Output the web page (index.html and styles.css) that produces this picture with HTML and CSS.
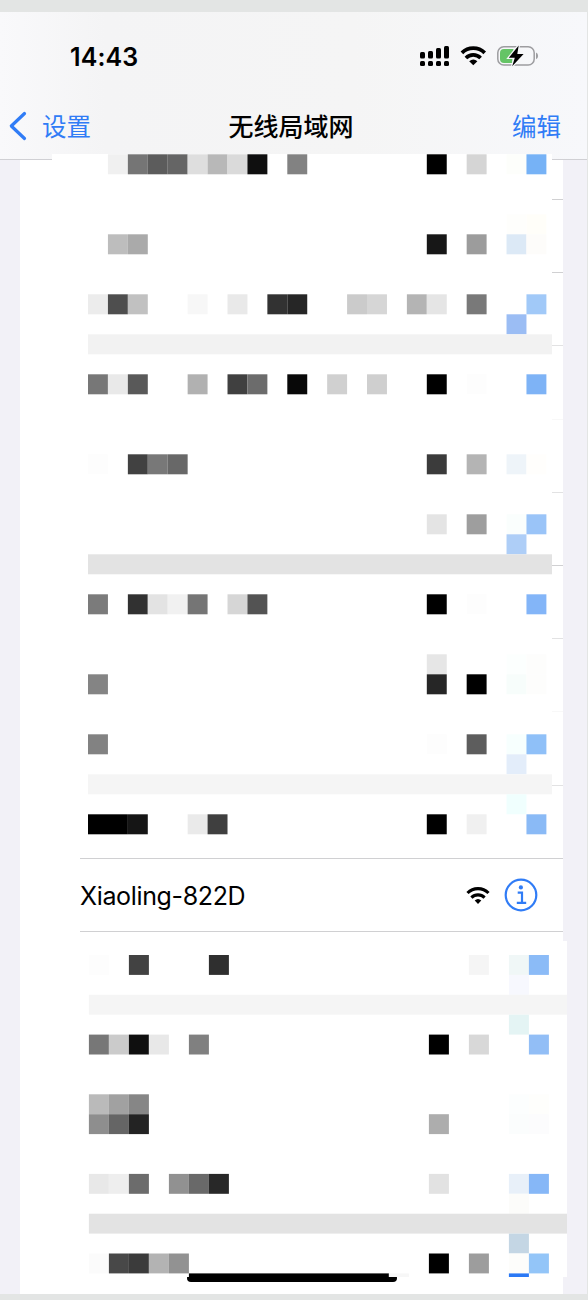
FILE: index.html
```
<!DOCTYPE html>
<html lang="zh-CN">
<head>
<meta charset="utf-8">
<title>无线局域网</title>
<link rel="stylesheet" href="styles.css">
</head>
<body>
<div class="screen">
  <header class="header">
    <div class="status">
      <span class="time">14:43</span>
      <svg class="status-icons" width="120" height="24" viewBox="0 0 120 24">
        <g>
          <rect x="1" y="8" width="5" height="6.5" rx="1.5"/><rect x="9" y="7" width="5" height="7.5" rx="1.5"/><rect x="17" y="4" width="5" height="10.5" rx="1.5"/><rect x="25" y="2" width="5" height="12.5" rx="1.5"/>
          <rect x="1" y="17" width="5" height="5" rx="1.5"/><rect x="9" y="17" width="5" height="5" rx="1.5"/><rect x="17" y="17" width="5" height="5" rx="1.5"/><rect x="25" y="17" width="5" height="5" rx="1.5"/>
        </g>
        <g fill="none" stroke="#000" stroke-width="3.7">
          <path d="M42.9 8.9a16 16 0 0 1 22.8 0"/>
          <path d="M46.9 14a10.4 10.4 0 0 1 14.7 0"/>
        </g>
        <path d="M50.2 17.2q4.1-3.3 8.2 0L54.3 21.2z"/>
        <rect x="78.8" y="2.8" width="36.4" height="18.2" rx="6" fill="none" stroke="#9d9da0" stroke-width="1.5"/>
        <path d="M94.5 5H85q-4 0-4 4v6q0 4 4 4h8z" fill="#65c466"/>
        <path d="M117 8.6q2.1 1 2.1 3.3t-2.1 3.3z" fill="#9d9da0"/>
        <path d="M99.7 1.6L89.8 13.7h6L93.2 22.2 104.6 10h-6.3z" stroke="#f6f7f9" stroke-width="2.4" paint-order="stroke"/>
      </svg>
    </div>
    <nav class="nav">
      <a class="back"><svg width="18" height="30" viewBox="0 0 18 30"><path d="M15.5 2.5L2.3 15l13.2 12.5" fill="none" stroke="#307cf6" stroke-width="3.2" stroke-linecap="round" stroke-linejoin="round"/></svg><span class="label">设置</span></a>
      <h1 class="title">无线局域网</h1>
      <a class="edit">编辑</a>
    </nav>
  </header>
  <main class="content">
    <div class="card">
      <div class="row first"></div>
      <div class="row"></div>
      <div class="row light"></div>
      <div class="row tall faint"></div>
      <div class="row light"></div>
      <div class="row"></div>
      <div class="row light"></div>
      <div class="row faint"></div>
      <div class="row tall light"></div>
      <div class="row"></div>
      <div class="row network">
        <span class="name">Xiaoling-822D</span>
        <svg class="wifi" width="24" height="18" viewBox="0 0 24 18">
          <g fill="none" stroke="#000" stroke-width="3.1"><path d="M1.5 7a14.8 14.8 0 0 1 21 0"/><path d="M5.4 11.6a9.4 9.4 0 0 1 13.2 0"/></g>
          <path d="M8.7 14.6q3.3-3 6.6 0L12 18z"/>
        </svg>
        <svg class="info" width="34" height="34" viewBox="0 0 34 34">
          <circle cx="17" cy="17" r="15.3" fill="none" stroke="#307cf6" stroke-width="2.2"/>
          <circle cx="16.9" cy="9.4" r="2.1" fill="#307cf6"/>
          <path d="M13.7 14.6H18V24.8M12.8 24.8h9.4" fill="none" stroke="#307cf6" stroke-width="2.2"/>
        </svg>
      </div>
    </div>
  </main>
  <div class="home-bar"></div>
  <svg class="mosaic upper" width="500" height="694" viewBox="0 0 500 694">
    <g transform="translate(36 .3) scale(19.93 20)">
      <rect x="1" y="0" fill="#f0f0f0"/><rect x="2" y="0" fill="#757575"/><rect x="3" y="0" fill="#5c5c5c"/><rect x="4" y="0" fill="#656565"/><rect x="5" y="0" fill="#dedede"/><rect x="6" y="0" fill="#b8b8b8"/><rect x="7" y="0" fill="#dadada"/><rect x="8" y="0" fill="#0f0f0f"/><rect x="10" y="0" fill="#828282"/><rect x="17" y="0"/><rect x="19" y="0" fill="#d5d5d5"/><rect x="21" y="0" fill="#fdfefb"/><rect x="22" y="0" fill="#76b2f6"/>
      <rect x="21" y="3" fill="#fefefc"/><rect x="22" y="3" fill="#fffef9"/>
      <rect x="1" y="4" fill="#bdbdbd"/><rect x="2" y="4" fill="#aaa"/><rect x="17" y="4" fill="#171717"/><rect x="19" y="4" fill="#9c9c9c"/><rect x="21" y="4" fill="#dce9f6"/><rect x="22" y="4" fill="#fdfcfa"/>
      <rect x="0" y="7" fill="#ececec"/><rect x="1" y="7" fill="#4e4e4e"/><rect x="2" y="7" fill="#c1c1c1"/><rect x="5" y="7" fill="#f7f7f7"/><rect x="7" y="7" fill="#e9e9e9"/><rect x="9" y="7" fill="#323232"/><rect x="10" y="7" fill="#262626"/><rect x="13" y="7" fill="#cbcbcb"/><rect x="14" y="7" fill="#d6d6d6"/><rect x="16" y="7" fill="#b4b4b4"/><rect x="17" y="7" fill="#e5e5e5"/><rect x="19" y="7" fill="#797979"/><rect x="22" y="7" fill="#a1c9f8"/>
      <rect x="21" y="8" fill="#9bbdf4"/>
      <rect class="bar" x="0" y="9" fill="#f2f2f2"/>
      <rect x="0" y="11" fill="#777"/><rect x="1" y="11" fill="#e9e9e9"/><rect x="2" y="11" fill="#595959"/><rect x="5" y="11" fill="#b1b1b1"/><rect x="7" y="11" fill="#404040"/><rect x="8" y="11" fill="#6c6c6c"/><rect x="10" y="11" fill="#080808"/><rect x="12" y="11" fill="#d0d0d0"/><rect x="14" y="11" fill="#cfcfcf"/><rect x="17" y="11"/><rect x="19" y="11" fill="#fdfdfd"/><rect x="22" y="11" fill="#7eb3f6"/>
      <rect x="0" y="15" fill="#fdfdfd"/><rect x="2" y="15" fill="#414141"/><rect x="3" y="15" fill="#787878"/><rect x="4" y="15" fill="#686868"/><rect x="17" y="15" fill="#3b3b3b"/><rect x="19" y="15" fill="#b4b4b4"/><rect x="21" y="15" fill="#eef4f9"/><rect x="22" y="15" fill="#fffefc"/>
      <rect x="17" y="18" fill="#e4e4e4"/><rect x="19" y="18" fill="#9e9e9e"/><rect x="21" y="18" fill="#fafefd"/><rect x="22" y="18" fill="#9ac4f8"/>
      <rect x="21" y="19" fill="#aecef7"/>
      <rect class="bar" x="0" y="20" fill="#e3e3e3"/>
      <rect x="0" y="22" fill="#7b7b7b"/><rect x="2" y="22" fill="#313131"/><rect x="3" y="22" fill="#e3e3e3"/><rect x="4" y="22" fill="#f1f1f1"/><rect x="5" y="22" fill="#757575"/><rect x="7" y="22" fill="#d6d6d6"/><rect x="8" y="22" fill="#535353"/><rect x="17" y="22"/><rect x="19" y="22" fill="#fdfdfd"/><rect x="22" y="22" fill="#83b5f8"/>
      <rect x="17" y="25" fill="#e6e6e6"/><rect x="21" y="25" fill="#fcfffe"/><rect x="22" y="25" fill="#fdfdfc"/>
      <rect x="0" y="26" fill="#848484"/><rect x="17" y="26" fill="#262626"/><rect x="19" y="26"/><rect x="21" y="26" fill="#f7fdfb"/><rect x="22" y="26" fill="#fdfdfc"/>
      <rect x="0" y="29" fill="#828282"/><rect x="17" y="29" fill="#fdfdfd"/><rect x="19" y="29" fill="#5d5d5d"/><rect x="21" y="29" fill="#f7fffe"/><rect x="22" y="29" fill="#8fc0f8"/>
      <rect x="21" y="30" fill="#e3edfa"/>
      <rect class="bar" x="0" y="31" fill="#f5f5f5"/>
      <rect x="21" y="32" fill="#f0fffe"/>
      <rect class="pair" x="0" y="33"/><rect x="2" y="33" fill="#151515"/><rect x="5" y="33" fill="#eaeaea"/><rect x="6" y="33" fill="#3f3f3f"/><rect x="17" y="33"/><rect x="19" y="33" fill="#f0f0f0"/><rect x="22" y="33" fill="#8abaf6"/>
    </g>
  </svg>
  <svg class="mosaic lower" width="487" height="336" viewBox="0 0 487 336">
    <g transform="translate(8.9 14) scale(20 19.9)">
      <rect x="0" y="0" fill="#fdfdfd"/><rect x="2" y="0" fill="#424242"/><rect x="6" y="0" fill="#2f2f2f"/><rect x="19" y="0" fill="#f5f5f5"/><rect x="21" y="0" fill="#f0f7f7"/><rect x="22" y="0" fill="#8bbbf7"/>
      <rect x="21" y="1" fill="#f7f8fe"/>
      <rect class="bar" x="0" y="2" fill="#f5f5f5"/>
      <rect x="21" y="3" fill="#e4f4f4"/>
      <rect x="0" y="4" fill="#777"/><rect x="1" y="4" fill="#cbcbcb"/><rect x="2" y="4" fill="#0f0f0f"/><rect x="3" y="4" fill="#e8e8e8"/><rect x="5" y="4" fill="#808080"/><rect x="17" y="4"/><rect x="19" y="4" fill="#d8d8d8"/><rect x="22" y="4" fill="#92bef6"/>
      <rect x="0" y="7" fill="#bababa"/><rect x="1" y="7" fill="#a1a1a1"/><rect x="2" y="7" fill="#868686"/><rect x="21" y="7" fill="#fcfefe"/><rect x="22" y="7" fill="#fefefc"/>
      <rect x="0" y="8" fill="#8e8e8e"/><rect x="1" y="8" fill="#656565"/><rect x="2" y="8" fill="#232323"/><rect x="17" y="8" fill="#adadad"/><rect x="21" y="8" fill="#fbfdfd"/><rect x="22" y="8" fill="#fcfcfd"/>
      <rect x="0" y="11" fill="#e8e8e8"/><rect x="1" y="11" fill="#eee"/><rect x="2" y="11" fill="#6c6c6c"/><rect x="4" y="11" fill="#919191"/><rect x="5" y="11" fill="#696969"/><rect x="6" y="11" fill="#282828"/><rect x="17" y="11" fill="#e2e2e2"/><rect x="21" y="11" fill="#e8f0f9"/><rect x="22" y="11" fill="#86b7f7"/>
      <rect x="21" y="12" fill="#fcfcfa"/>
      <rect class="bar" x="0" y="13" fill="#e3e3e3"/>
      <rect x="21" y="14" fill="#c4d6e4"/>
      <rect x="0" y="15" fill="#fbfbfb"/><rect x="1" y="15" fill="#484848"/><rect x="2" y="15" fill="#3b3b3b"/><rect x="3" y="15" fill="#b3b3b3"/><rect x="4" y="15" fill="#929292"/><rect x="17" y="15"/><rect x="19" y="15" fill="#9d9d9d"/><rect x="21" y="15" fill="#fdfdfb"/><rect x="22" y="15" fill="#93c5f8"/>
      <rect class="strip" x="5" y="16"/><rect x="15" y="16" fill="#f7f7f7"/><rect x="21" y="16" fill="#2b79f5"/>
    </g>
  </svg>
</div>
</body>
</html>
```
FILE: styles.css
```
body {
  margin: 0;
  width: 588px;
  height: 1300px;
  box-sizing: border-box;
  padding: 12px 1px 6px 0;
  background: #e3e5e4;
  font-family: Inter, "Noto Sans CJK SC", sans-serif;
  color: #000;
}

.screen {
  position: relative;
  display: flex;
  flex-direction: column;
  height: 1282px;
  overflow: hidden;
  background: #f2f1f7;
}

.header {
  height: 147px;
  border-bottom: 1px solid #d0d0d4;
  background: linear-gradient(90deg, #f9f9fb 0, #f4f4f5 18%, #f5f5f5 60%, #f7f8fb 100%);
}

.status {
  display: flex;
  justify-content: space-between;
  align-items: center;
  height: 88px;
  padding: 0 48px 0 70px;
}

.time {
  padding-top: 1px;
  font-size: 25px;
  font-weight: 600;
  letter-spacing: 0.1px;
}

.nav {
  display: grid;
  grid-template-columns: 1fr auto 1fr;
  align-items: center;
  height: 52px;
  padding: 0 26px 0 21px;
  font-size: 24.5px;
}

.back,
.edit {
  color: #307cf6;
}

.back {
  display: flex;
  align-items: center;
  gap: 15px;
  margin-left: -12px;
}

.label,
.title,
.edit {
  padding-bottom: 2px;
}

.title {
  margin: 0;
  font-size: 25px;
  font-weight: 500;
}

.edit {
  text-align: right;
}

.content {
  flex: 1;
  padding: 0 24px 0 20px;
}

.card {
  height: 100%;
  background: #fff;
}

.row {
  box-sizing: border-box;
  height: 73px;
  margin-left: 60px;
  border-bottom: 1px solid #d0d0d2;
}

.row.first {
  height: 40px;
}

.row.tall {
  height: 74px;
}

.row.light {
  border-color: #e2e2e3;
}

.row.faint {
  border-color: #f8f8f8;
}

.network {
  display: flex;
  align-items: center;
  padding-right: 25px;
}

.name {
  flex: 1;
  padding-top: 2px;
  font-size: 25px;
  letter-spacing: -0.35px;
}

.info {
  margin-left: 14px;
}

.home-bar {
  position: absolute;
  left: 187px;
  bottom: 12px;
  width: 210px;
  height: 8px;
  border-radius: 4px;
  background: #000;
}

.mosaic {
  position: absolute;
  background: #fff;
}

.mosaic rect {
  width: 1px;
  height: 1px;
}

.mosaic .bar {
  width: 24px;
}

.mosaic .pair {
  width: 2px;
}

.mosaic .strip {
  width: 10px;
}

.upper {
  left: 52px;
  top: 142px;
}

.lower {
  left: 80px;
  top: 929px;
}
```
